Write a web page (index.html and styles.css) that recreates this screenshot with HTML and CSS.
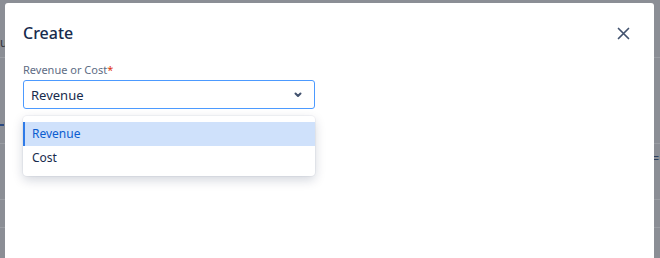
FILE: index.html
```html
<!DOCTYPE html>
<html>
<head>
<meta charset="utf-8">
<link rel="stylesheet" href="styles.css">
</head>
<body>
<div class="backdrop">
  <div class="bg-line l1"></div>
  <div class="bg-line l2"></div>
  <div class="bg-line l3"></div>
  <div class="bg-line l4"></div>
  <span class="bg-text">ur</span>
  <span class="bg-mark"></span>
  <span class="bg-eq">=</span>
</div>
<div class="modal">
  <div class="header">
    <h1 class="title">Create</h1>
    <button class="close" aria-label="Close">
      <svg width="13" height="13" viewBox="0 0 13 13"><path d="M1.5 1.5 L11.5 11.5 M11.5 1.5 L1.5 11.5" stroke="#42526e" stroke-width="1.7" stroke-linecap="round"/></svg>
    </button>
  </div>
  <div class="field">
    <label class="label">Revenue or Cost<span class="req">*</span></label>
    <div class="select">
      <span class="value">Revenue</span>
      <svg class="chev" width="10" height="8" viewBox="0 0 10 8"><path d="M2.5 2.5 L5 5 L7.5 2.5" stroke="#42526e" stroke-width="2" fill="none" stroke-linecap="round" stroke-linejoin="round"/></svg>
    </div>
    <div class="menu">
      <div class="option selected">Revenue</div>
      <div class="option">Cost</div>
    </div>
  </div>
</div>
</body>
</html>
```

FILE: styles.css
```css
html, body {
  margin: 0;
  height: 100%;
}
body {
  background: #8b8e95;
  padding: 3px 6px 0 5px;
  box-sizing: border-box;
  display: flex;
  font-family: "Noto Sans", "Open Sans", sans-serif;
  color: #172b4d;
  overflow: hidden;
  position: relative;
}
.backdrop {
  position: absolute;
  inset: 0;
}
.bg-line {
  position: absolute;
  left: 0;
  right: 0;
  height: 1px;
  background: #9a9da3;
}
.l1 { top: 57px; }
.l2 { top: 143px; }
.l3 { top: 199px; }
.l4 { top: 227px; }
.bg-text {
  position: absolute;
  left: 0;
  top: 34px;
  font-size: 12px;
  color: #30343c;
}
.bg-mark {
  position: absolute;
  left: 0;
  top: 124px;
  width: 4px;
  height: 2px;
  background: #2b4a80;
}
.bg-eq {
  position: absolute;
  right: 1px;
  top: 150px;
  font-size: 12px;
  color: #2e3e5c;
}
.modal {
  position: relative;
  flex: 1;
  background: #fff;
  border-radius: 3px 3px 0 0;
  padding: 0 18px;
}
.header {
  display: flex;
  align-items: center;
  justify-content: space-between;
  height: 60px;
}
.title {
  margin: 0;
  font-size: 16px;
  font-weight: 500;
  color: #172b4d;
}
.close {
  border: 0;
  background: none;
  padding: 0;
  width: 13px;
  height: 13px;
  margin-right: 6px;
  display: flex;
}
.field {
  width: 292px;
}
.label {
  display: block;
  font-size: 11px;
  color: #5e6c84;
  line-height: 14px;
  margin-top: 0;
}
.req {
  color: #de350b;
}
.select {
  margin-top: 3px;
  height: 29px;
  box-sizing: border-box;
  border: 1px solid #4c9aff;
  border-radius: 3px;
  display: flex;
  align-items: center;
  justify-content: space-between;
  padding: 0 11px 0 7px;
  font-size: 13px;
  color: #172b4d;
}
.menu {
  margin-top: 7px;
  padding: 6px 0;
  border-radius: 4px;
  background: #fff;
  box-shadow: 0 4px 11px rgba(9, 30, 66, 0.18), 0 0 0 1px rgba(9, 30, 66, 0.04);
}
.option {
  height: 24px;
  line-height: 24px;
  padding-left: 9px;
  font-size: 12px;
  color: #172b4d;
}
.option.selected {
  background: #cfe1fb;
  color: #0b5ccf;
  box-shadow: inset 2px 0 0 #2f7be8;
}
```
